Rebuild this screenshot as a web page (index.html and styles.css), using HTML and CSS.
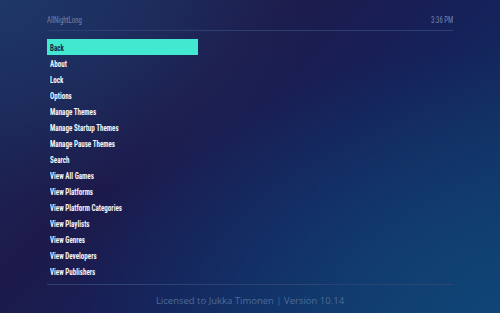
FILE: index.html
```html
<!DOCTYPE html>
<html lang="en">
<head>
    <meta charset="UTF-8">
    <meta name="viewport" content="width=device-width, initial-scale=1.0">
    <title>AllNightLong</title>

    <link rel="stylesheet" href="styles.css">
</head>
<body>
    <div class="screen">
        <div class="header">
            <span class="app-name">AllNightLong</span>
            <span class="clock">3:36 PM</span>
        </div>

        <div class="menu">
            <div class="menu-item active"><span class="label">Back</span></div>
            <div class="menu-item"><span class="label">About</span></div>
            <div class="menu-item"><span class="label">Lock</span></div>
            <div class="menu-item"><span class="label">Options</span></div>
            <div class="menu-item"><span class="label">Manage Themes</span></div>
            <div class="menu-item"><span class="label">Manage Startup Themes</span></div>
            <div class="menu-item"><span class="label">Manage Pause Themes</span></div>
            <div class="menu-item"><span class="label">Search</span></div>
            <div class="menu-item"><span class="label">View All Games</span></div>
            <div class="menu-item"><span class="label">View Platforms</span></div>
            <div class="menu-item"><span class="label">View Platform Categories</span></div>
            <div class="menu-item"><span class="label">View Playlists</span></div>
            <div class="menu-item"><span class="label">View Genres</span></div>
            <div class="menu-item"><span class="label">View Developers</span></div>
            <div class="menu-item"><span class="label">View Publishers</span></div>
        </div>

        <div class="footer">Licensed to Jukka Timonen | Version 10.14</div>
    </div>
</body>
</html>
```

FILE: styles.css
```css
* {
    margin: 0;
    padding: 0;
    box-sizing: border-box;
}


html, body {
    width: 100%;
    height: 100%;
}

body {
    overflow: hidden;
    background:
        radial-gradient(ellipse at 100% 100%, rgba(16, 70, 120, 0.9) 0%, rgba(16, 70, 120, 0) 60%),
        radial-gradient(ellipse at 0% 0%, rgba(30, 56, 104, 0.9) 0%, rgba(30, 56, 104, 0) 45%),
        linear-gradient(135deg, #1b2a5a 0%, #1d1a4b 35%, #15215a 60%, #103a69 100%);
}


.screen {
    height: 100%;
    padding: 0 47px;
    display: flex;
    flex-direction: column;
}

/* the theme font is a narrow display face, squeeze Roboto Condensed to fit */
.header {
    height: 31px;
    display: flex;
    justify-content: space-between;
    align-items: center;
    padding-top: 9px;
    border-bottom: 1px solid #2c3f70;
    font-family: "Roboto Condensed", "Liberation Sans Narrow", "DejaVu Sans Condensed", sans-serif;
    font-size: 9px;
    color: #7484ac;
}

.header .app-name {
    display: inline-block;
    transform: scaleX(0.76);
    transform-origin: left center;
}

.header .clock {
    display: inline-block;
    transform: scaleX(0.76);
    transform-origin: right center;
}


.menu {
    padding: 8px 0 5px;
    border-bottom: 1px solid #2c4374;
}

.menu-item {
    width: 151px;
    height: 16px;
    line-height: 17px;
    padding-left: 3px;
    font-family: "Roboto Condensed", "Liberation Sans Narrow", "DejaVu Sans Condensed", sans-serif;
    font-weight: bold;
    font-size: 9.5px;
    color: #f4f6fb;
    white-space: nowrap;
}

.menu-item .label {
    display: inline-block;
    transform: scaleX(0.74);
    transform-origin: left center;
}

.menu-item.active {
    background: #42e8cf;
    color: #13244a;
}


.footer {
    padding-top: 9px;
    text-align: center;
    font-family: "Open Sans", sans-serif;
    font-size: 9.5px;
    color: #4d6b98;
}
```
